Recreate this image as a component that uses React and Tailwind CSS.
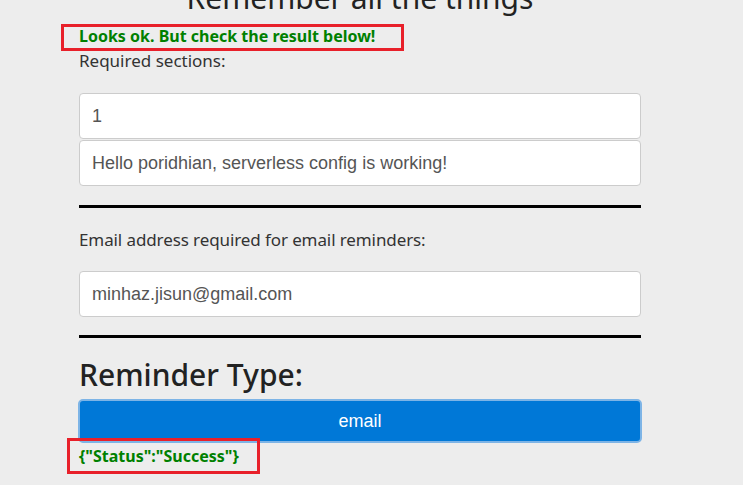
import React from "react";

const sans = { fontFamily: '"Noto Sans", "Open Sans", sans-serif' };

const Field = ({ value, className = "" }) => (
  <div
    className={`h-[46px] flex items-center px-[12px] bg-white border border-[#cccccc] rounded-[4px] text-[18px] text-[#555555] ${className}`}
    style={{ fontFamily: '"Liberation Sans", Arial, sans-serif' }}
  >
    {value}
  </div>
);

const App = () => {
  return (
    <div className="relative min-h-screen h-[485px] overflow-hidden bg-[#ededed]" style={sans}>
      <div className="ml-[79px] w-[562px]">
        <h1 className="mt-[-22px] h-[40px] leading-[40px] text-[30px] text-center text-[#222222] whitespace-nowrap">
          Remember all the things
        </h1>

        <div className="mt-[8px] h-[20px] leading-[20px] text-[16px] font-bold text-[#008000]">
          Looks ok. But check the result below!
        </div>

        <div className="mt-[5px] h-[20px] leading-[20px] text-[17px] text-[#333333]">Required sections:</div>

        <Field value="1" className="mt-[22px]" />
        <Field value="Hello poridhian, serverless config is working!" className="mt-[1px]" />

        <div className="mt-[19px] h-[3px] bg-black" />

        <div className="mt-[22px] h-[20px] leading-[20px] text-[17px] text-[#333333] tracking-[-0.1px]">
          Email address required for email reminders:
        </div>

        <Field value="minhaz.jisun@gmail.com" className="mt-[21px]" />

        <div className="mt-[18px] h-[3px] bg-black" />

        <h2 className="mt-[19px] h-[36px] leading-[36px] text-[30px] font-medium text-[#222222]">Reminder Type:</h2>

        <button
          className="mt-[6px] -ml-[1px] w-[564px] h-[44px] rounded-[5px] bg-[#0078d7] border-2 border-[#7db4e6] text-white text-[18px]"
          style={{ fontFamily: '"Liberation Sans", Arial, sans-serif' }}
        >
          email
        </button>

        <div className="mt-[3px] h-[20px] leading-[20px] text-[16px] font-bold text-[#008000]">
          {'{"Status":"Success"}'}
        </div>
      </div>

      {/* annotation boxes */}
      <div className="absolute left-[61px] top-[24px] w-[343px] h-[27px] border-[3px] border-[#e8202a]" />
      <div className="absolute left-[67px] top-[438px] w-[193px] h-[36px] border-[3px] border-[#e8202a]" />
    </div>
  );
};

export default App;
